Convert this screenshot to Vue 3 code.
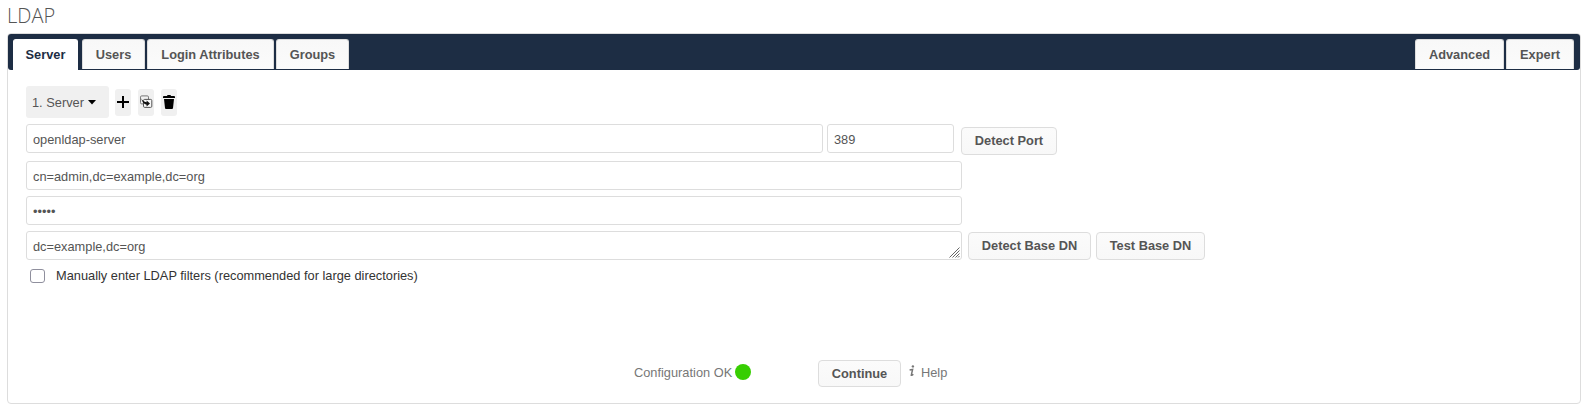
<script setup>
import { ref } from 'vue'

const tabs = ['Server', 'Users', 'Login Attributes', 'Groups']
const extraTabs = ['Advanced', 'Expert']
const active = ref('Server')
const host = ref('openldap-server')
const port = ref('389')
const agentDn = ref('cn=admin,dc=example,dc=org')
const password = ref('admin')
const baseDn = ref('dc=example,dc=org')
const manual = ref(false)
</script>

<template>
  <main class="page">
    <h2>LDAP</h2>
    <section class="panel">
      <nav class="tabs">
        <button
          v-for="t in tabs"
          :key="t"
          class="tab"
          :class="[t.split(' ')[0].toLowerCase(), { active: active === t }]"
          @click="active = t"
        >{{ t }}</button>
        <span class="spacer"></span>
        <button
          v-for="t in extraTabs"
          :key="t"
          class="tab"
          :class="[t.toLowerCase(), { active: active === t }]"
          @click="active = t"
        >{{ t }}</button>
      </nav>

      <div class="content">
        <div class="row chooser">
          <button class="select">
            <span>1. Server</span>
            <svg width="8" height="5" viewBox="0 0 8 5"><path d="M0 0h8L4 4.4z" /></svg>
          </button>
          <button class="icon" aria-label="Add">
            <svg width="16" height="16" viewBox="0 0 16 16"><path d="M7 2h2v5h5v2H9v5H7V9H2V7h5z" /></svg>
          </button>
          <button class="icon" aria-label="Copy">
            <svg width="16" height="16" viewBox="0 0 16 16" fill="none">
              <rect x="2.5" y="1.9" width="8" height="8" rx="1.2" stroke="#777" />
              <rect x="5.5" y="5.4" width="8.3" height="8" rx="1.2" fill="#f8f8f8" stroke="#555" />
              <path d="M3.2 4.2c1 2.2 3 3.6 5.4 4V6.4L12 9.5l-3.4 2.9v-1.7C6 10.2 4 7.7 3.2 4.2z" fill="#111" />
            </svg>
          </button>
          <button class="icon" aria-label="Delete">
            <svg width="16" height="16" viewBox="0 0 16 16"><path d="M6.5 1 6 2H3c-.5 0-1 .5-1 1v1h12V3c0-.5-.5-1-1-1h-3l-.5-1zM3 5l1 9c.1.5.5 1 1 1h6c.5 0 .9-.5 1-1l1-9z" /></svg>
          </button>
        </div>

        <div class="row host-row">
          <input v-model="host" class="field host" />
          <input v-model="port" class="field port" />
          <button class="btn detect-port">Detect Port</button>
        </div>
        <div class="row dn-row"><input v-model="agentDn" class="field wide" /></div>
        <div class="row pw-row"><input v-model="password" type="password" class="field wide" /></div>
        <div class="row base-row">
          <div class="area">
            <textarea v-model="baseDn" class="field wide"></textarea>
            <svg class="grip" width="11" height="11" viewBox="0 0 11 11">
              <path d="M.5 10.5l10-10M3.5 10.5l7-7M6.5 10.5l4-4M9 10.5l1.5-1.5" stroke="#666" />
            </svg>
          </div>
          <button class="btn detect-base">Detect Base DN</button>
          <button class="btn test-base">Test Base DN</button>
        </div>
        <label class="check">
          <input v-model="manual" type="checkbox" />
          <span>Manually enter LDAP filters (recommended for large directories)</span>
        </label>

        <footer>
          <span class="status">Configuration OK</span>
          <span class="dot"></span>
          <button class="btn continue">Continue</button>
          <svg class="info" width="6" height="12" viewBox="0 0 6 12">
            <circle cx="3.9" cy="1.4" r="1.2" fill="#777" />
            <path d="M.6 5 3.6 4.4 2.3 10.2q.8.3 2-1" fill="none" stroke="#777" stroke-width="1.5" />
          </svg>
          <span class="help">Help</span>
        </footer>
      </div>
    </section>
  </main>
</template>

<style>
body { background: #fff; }
</style>

<style scoped>
* { box-sizing: border-box; }
.page {
  height: 412px;
  padding: 0 6px 0 7px;
  overflow: hidden;
  font: 12.8px/16px "Liberation Sans", Arial, sans-serif;
  color: #333;
}
h2 {
  height: 33px;
  margin: 0;
  font: 300 20px/32px "Open Sans", sans-serif;
  color: #555;
}
button, input, textarea { margin: 0; font: inherit; flex: none; }
.panel {
  height: 371px;
  border: 1px solid #ddd;
  border-radius: 4px;
}
.tabs {
  display: flex;
  align-items: flex-start;
  height: 36px;
  padding: 5px 6px 0 5px;
  background: #1d2d44;
  border-radius: 3px;
}
.tab {
  height: 30px;
  padding: 0;
  border: 1px solid #ddd;
  border-bottom: 0;
  border-radius: 3px 3px 0 0;
  background: linear-gradient(#f8f8f8, #fbfbfb);
  color: #555;
  font-weight: bold;
  white-space: nowrap;
}
.tab.active { height: 31px; background: #fff; border-color: #fff; color: #1d2d44; }
.server { width: 65px; margin-right: 4px; }
.users { width: 63px; margin-right: 2px; }
.login { width: 127px; margin-right: 2px; }
.groups { width: 73px; }
.spacer { flex: 1; }
.advanced { width: 89px; margin-right: 2px; }
.expert { width: 68px; }
.content { padding: 16px 18px 0; }
.row { display: flex; align-items: flex-start; }
.chooser { height: 32px; align-items: center; }
.select {
  display: flex;
  align-items: center;
  gap: 4px;
  width: 83px;
  height: 32px;
  margin-right: 6px;
  padding: 0 6px;
  border: 0;
  border-radius: 3px;
  background: #f0f0f0;
  color: #555;
}
.select span { padding-top: 2px; }
.icon {
  display: flex;
  align-items: center;
  width: 16px;
  height: 27px;
  margin-right: 7px;
  padding: 0 0 1px;
  border: 0;
  border-radius: 3px;
  background: #f0f0f0;
}
.field {
  height: 29px;
  padding: 7px 6px 5px;
  border: 1px solid #ddd;
  border-radius: 3px;
  background: #fff;
  color: #555;
  outline: none;
}
.area { position: relative; height: 29px; }
textarea.field { display: block; overflow: hidden; resize: none; line-height: 15px; }
.grip { position: absolute; right: 2px; bottom: 2px; pointer-events: none; }
.host-row { margin-top: 6px; }
.host { width: 797px; margin-right: 4px; }
.port { width: 127px; margin-right: 7px; }
.wide { width: 936px; }
.btn {
  height: 28px;
  padding: 0;
  border: 1px solid #ddd;
  border-radius: 4px;
  background: linear-gradient(#fbfbfb, #f8f8f8);
  color: #555;
  font-weight: bold;
}
.detect-port { width: 96px; margin-top: 3px; }
.dn-row { margin-top: 8px; }
.host-row { height: 29px; }
.pw-row { margin-top: 6px; }
.base-row { margin-top: 6px; height: 29px; }
.detect-base { width: 123px; margin: 1px 5px 0 6px; }
.test-base { width: 109px; margin-top: 1px; }
.check {
  display: flex;
  align-items: center;
  gap: 11px;
  width: 400px;
  height: 16px;
  margin: 8px 0 0 4px;
}
.check input {
  appearance: none;
  width: 15px;
  height: 14px;
  border: 1px solid #8f8f9d;
  border-radius: 3px;
  background: #fff;
}
footer {
  display: flex;
  align-items: flex-start;
  margin: 76px 0 0 608px;
  color: #777;
}
.status { width: 101px; margin-top: 5px; white-space: nowrap; }
.dot { width: 16px; height: 16px; margin-top: 4px; border-radius: 50%; background: #37ce02; }
.continue { width: 83px; height: 27px; margin-left: 67px; }
.info { margin: 5px 0 0 8px; }
.help { margin: 5px 0 0 6px; }
</style>
